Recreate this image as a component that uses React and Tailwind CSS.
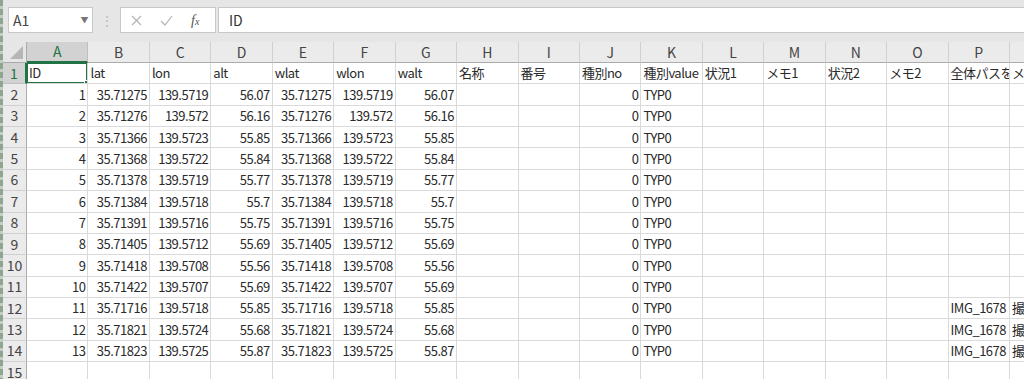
import React from 'react';

const cols = ['A', 'B', 'C', 'D', 'E', 'F', 'G', 'H', 'I', 'J', 'K', 'L', 'M', 'N', 'O', 'P', 'Q'];

const header = ['ID', 'lat', 'lon', 'alt', 'wlat', 'wlon', 'walt', '名称', '番号', '種別no', '種別value', '状況1', 'メモ1', '状況2', 'メモ2', '全体パスを', 'メ'];

const raw = [
    [1, '35.71275', '139.5719', '56.07', '35.71275', '139.5719', '56.07'],
    [2, '35.71276', '139.572', '56.16', '35.71276', '139.572', '56.16'],
    [3, '35.71366', '139.5723', '55.85', '35.71366', '139.5723', '55.85'],
    [4, '35.71368', '139.5722', '55.84', '35.71368', '139.5722', '55.84'],
    [5, '35.71378', '139.5719', '55.77', '35.71378', '139.5719', '55.77'],
    [6, '35.71384', '139.5718', '55.7', '35.71384', '139.5718', '55.7'],
    [7, '35.71391', '139.5716', '55.75', '35.71391', '139.5716', '55.75'],
    [8, '35.71405', '139.5712', '55.69', '35.71405', '139.5712', '55.69'],
    [9, '35.71418', '139.5708', '55.56', '35.71418', '139.5708', '55.56'],
    [10, '35.71422', '139.5707', '55.69', '35.71422', '139.5707', '55.69'],
    [11, '35.71716', '139.5718', '55.85', '35.71716', '139.5718', '55.85'],
    [12, '35.71821', '139.5724', '55.68', '35.71821', '139.5724', '55.68'],
    [13, '35.71823', '139.5725', '55.87', '35.71823', '139.5725', '55.87'],
];

// build rows of 17 cells: {v, num}
const rows = raw.map(r => {
    const cells = r.map(v => ({ v: String(v), num: true }));
    cells.push({ v: '' }, { v: '' }, { v: '0', num: true }, { v: 'TYP0' });
    for (let i = 0; i < 4; i++) cells.push({ v: '' });
    if (r[0] >= 11) cells.push({ v: 'IMG_1678' }, { v: '撮' });
    else cells.push({ v: '' }, { v: '' });
    return cells;
});
rows.unshift(header.map(v => ({ v })));
rows.push(cols.map(() => ({ v: '' })));

const font = { fontFamily: '"Noto Sans CJK JP", "Noto Sans", sans-serif' };

const App = () => {
    return (
        <div className="flex w-[1024px] h-[379px] overflow-hidden bg-white text-[13px] tracking-[-0.5px] text-[#2a2a2a]" style={font}>
            {/* window edge */}
            <div className="w-[3px] shrink-0 bg-[repeating-linear-gradient(to_bottom,#8ea58f_0px,#8ea58f_6px,#c3cec2_6px,#c3cec2_9px)]"></div>

            <div className="flex flex-col flex-1 min-w-0">
                {/* formula bar */}
                <div className="flex items-start h-[42px] shrink-0 bg-[#e6e6e6] pt-[7px]">
                    <div className="ml-[5px] w-[85px] h-[26px] bg-white border border-[#c8c8c8] flex items-center justify-between pl-[4px] pr-[4px]">
                        <span className="text-[14px] text-[#444] tracking-normal">A1</span>
                        <span className="text-[8px] text-[#777]">▼</span>
                    </div>
                    <div className="w-[27px] h-[26px] flex items-center justify-center text-[#b5b5b5] text-[12px]">⋮</div>
                    <div className="w-[96px] h-[26px] bg-white border border-[#c8c8c8] flex items-center pl-[9px] text-[#b4b4b4]">
                        <svg width="11" height="11" viewBox="0 0 11 11" className="ml-[1px]">
                            <path d="M1 1 L10 10 M10 1 L1 10" stroke="#b4b4b4" strokeWidth="1.2" />
                        </svg>
                        <svg width="13" height="11" viewBox="0 0 13 11" className="ml-[18px]">
                            <path d="M1 6 L5 10 L12 1" stroke="#b4b4b4" strokeWidth="1.2" fill="none" />
                        </svg>
                        <span className="ml-[18px] text-[14px] italic text-[#555] tracking-normal" style={{ fontFamily: '"Liberation Serif", serif' }}>
                            f<span className="text-[10px]">x</span>
                        </span>
                    </div>
                    <div className="ml-[2px] flex-1 h-[26px] bg-white border border-[#c8c8c8] border-r-0 flex items-center pl-[10px]">
                        <span className="text-[14px] text-[#333] tracking-normal">ID</span>
                    </div>
                </div>

                {/* sheet */}
                <div className="grid grid-cols-[24px_repeat(17,61.44px)] grid-rows-[21px_repeat(15,21.36px)]">
                    {/* corner */}
                    <div className="relative bg-[#e6e6e6] border-r border-b border-[#ababab]">
                        <div className="absolute right-[3px] bottom-[3px] w-0 h-0 border-l-[13px] border-l-transparent border-b-[13px] border-b-[#b6b6b6]"></div>
                    </div>
                    {cols.map((c, i) => (
                        <div
                            key={c}
                            className={
                                i === 0
                                    ? 'flex items-center justify-center bg-[#d2d2d2] text-[#217346] border-r border-[#c0c0c0] border-b-2 border-b-[#217346] text-[14px] tracking-normal'
                                    : 'flex items-center justify-center bg-[#ebebeb] text-[#444] border-r border-[#d0d0d0] border-b border-b-[#ababab] text-[14px] tracking-normal'
                            }
                        >
                            {c}
                        </div>
                    ))}

                    {rows.map((r, ri) => (
                        <React.Fragment key={ri}>
                            <div
                                className={
                                    ri === 0
                                        ? 'flex items-center justify-center bg-[#d2d2d2] text-[#217346] border-r-2 border-r-[#217346] border-b border-[#c0c0c0] text-[14px] tracking-normal'
                                        : 'flex items-center justify-center bg-[#ebebeb] text-[#444] border-r border-r-[#ababab] border-b border-[#d0d0d0] text-[14px] tracking-normal'
                                }
                            >
                                {ri + 1}
                            </div>
                            {r.map((cell, ci) => (
                                <div
                                    key={ci}
                                    className={
                                        'relative flex items-center overflow-hidden whitespace-nowrap border-r border-b border-[#dadada] ' +
                                        (cell.num ? 'justify-end pr-[2px]' : 'justify-start pl-[2px]')
                                    }
                                >
                                    {cell.v}
                                    {ri === 0 && ci === 0 && (
                                        <>
                                            <div className="absolute -left-[1px] -top-[1px] right-[-1px] bottom-[-1px] border-2 border-[#217346]"></div>
                                            <div className="absolute right-[-3px] bottom-[-3px] w-[6px] h-[6px] bg-[#217346] border border-white"></div>
                                        </>
                                    )}
                                </div>
                            ))}
                        </React.Fragment>
                    ))}
                </div>
            </div>
        </div>
    );
};

export default App;
